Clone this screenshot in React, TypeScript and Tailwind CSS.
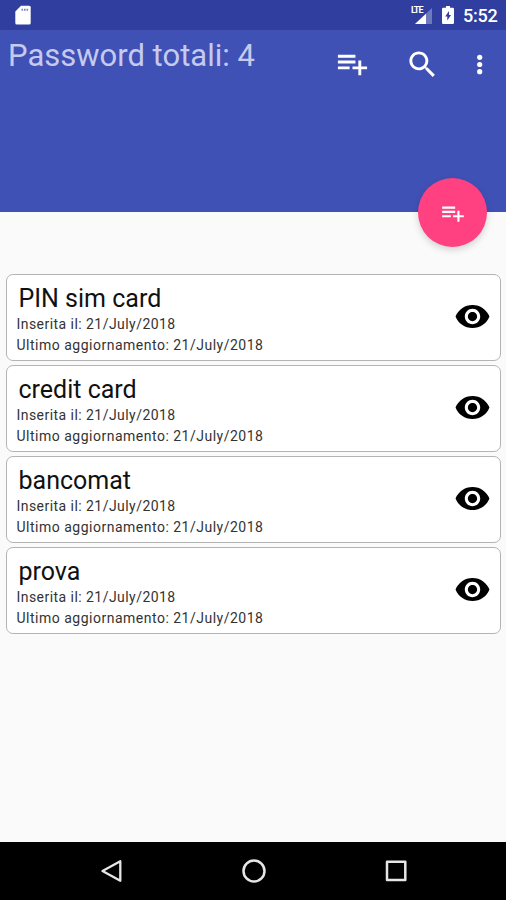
const entries = ["PIN sim card", "credit card", "bancomat", "prova"];

function PlaylistAdd({ className }: { className: string }) {
  return (
    <svg viewBox="0 0 24 24" fill="currentColor" className={className}>
      <path d="M14 10H2v2h12v-2zm0-4H2v2h12V6zm4 8v-4h-2v4h-4v2h4v4h2v-4h4v-2h-4zM2 16h8v-2H2v2z" />
    </svg>
  );
}

function StatusBar() {
  return (
    <div className="flex h-[30px] items-center bg-[#303f9f] pl-[15px] pr-[9px] text-white">
      <svg viewBox="0 0 16 20" className="h-5 w-4">
        <path d="M6 0.8H14.2Q15.700 0.800 15.700 2.300V18Q15.700 19.500 14.200 19.500H1.800Q0.300 19.500 0.300 18V6.500Z" fill="#fff" />
        <path d="M6.500 3.800h1.600v2h-1.600zM9 3.800h1.600v2H9zM11.500 3.800h1.600v2h-1.600z" fill="#7d87c2" />
      </svg>
      <div className="relative ml-auto h-[18px] w-[22px]">
        <svg viewBox="0 0 22 18" className="h-[18px] w-[22px]">
          <path d="M22 2V18H5Z" fill="#6f7abc" />
          <path d="M16 7.700V18H5Z" fill="#fff" />
          <path d="M0 0H13V9H0Z" fill="#303f9f" />
        </svg>
        <span className="absolute left-[1px] top-0 text-[9px] font-bold leading-[9px] tracking-[-1px]">LTE</span>
      </div>
      <svg viewBox="0 0 12 18" className="ml-[10px] h-[18px] w-3">
        <path d="M4 0h4v1.800h2.800q1.200 0 1.200 1.200v13.800q0 1.200-1.200 1.200H1.200Q0 18 0 16.800V3Q0 1.800 1.200 1.800H4Z" fill="#fff" />
        <path d="M7 5L3.200 10.400H5.300V14.500L9 9H7Z" fill="#303f9f" />
      </svg>
      <span className="ml-[9px] w-[34px] whitespace-nowrap pt-px text-[18px] font-medium leading-[30px] tracking-[-0.2px]">5:52</span>
    </div>
  );
}

function EntryCard({ title }: { title: string }) {
  return (
    <li className="flex h-[87px] items-center justify-between rounded-[7px] border-[1.5px] border-[#b4b4b4] bg-white pl-[9.5px] pr-[9px]">
      <div className="h-full pt-[9px]">
        <h2 className="pl-[2px] text-[25px] leading-[30px] text-[#111]">{title}</h2>
        <p className="text-[14px] leading-[20px] tracking-[0.45px] text-[#333]">Inserita il: 21/July/2018</p>
        <p className="text-[14px] leading-[22px] tracking-[0.5px] text-[#333]">Ultimo aggiornamento: 21/July/2018</p>
      </div>
      <svg viewBox="0 0 24 24" className="mb-[2px] h-[37px] w-[37px]">
        <path d="M12 4.500C7 4.500 2.730 7.610 1 12c1.730 4.390 6 7.500 11 7.500s9.270-3.110 11-7.500c-1.730-4.390-6-7.500-11-7.500zM12 17c-2.760 0-5-2.240-5-5s2.240-5 5-5 5 2.240 5 5-2.240 5-5 5zm0-8c-1.660 0-3 1.340-3 3s1.340 3 3 3 3-1.340 3-3-1.340-3-3-3z" />
      </svg>
    </li>
  );
}

export default function App() {
  return (
    <div className="flex h-[900px] w-[506px] flex-col overflow-hidden bg-[#fafafa] font-[Roboto,sans-serif]">
      <StatusBar />
      <header className="relative flex h-[182px] items-start bg-[#3f51b5] pl-2 text-white">
        <h1 className="mt-2 whitespace-nowrap text-[31px] leading-[36px] text-[#c5caee]">Password totali: 4</h1>
        <div className="ml-auto flex pr-[16px] pt-4">
          <PlaylistAdd className="h-[35px] w-[35px]" />
          <svg viewBox="0 0 24 24" fill="currentColor" className="ml-[35px] mt-[0.5px] h-[35px] w-[35px]">
            <path d="M15.500 14h-.790l-.280-.270C15.410 12.590 16 11.110 16 9.500 16 5.910 13.090 3 9.500 3S3 5.910 3 9.500 5.910 16 9.500 16c1.610 0 3.090-.590 4.230-1.570l.270.280v.790l5 4.990L20.490 19l-4.990-5zm-6 0C7.010 14 5 11.990 5 9.500S7.010 5 9.500 5 14 7.010 14 9.500 11.990 14 9.500 14z" />
          </svg>
          <svg viewBox="0 0 20 36" fill="currentColor" className="ml-[30px] h-9 w-5">
            <circle cx="9.700" cy="11.300" r="2.600" />
            <circle cx="9.700" cy="18.500" r="2.600" />
            <circle cx="9.700" cy="25.700" r="2.600" />
          </svg>
        </div>
        <button className="absolute bottom-[-35px] right-[19px] flex h-[69px] w-[69px] items-center justify-center rounded-full bg-[#ff4081] text-white shadow-[0_3px_7px_rgba(0,0,0,0.16)]">
          <PlaylistAdd className="h-[26px] w-[26px]" />
        </button>
      </header>
      <main className="flex-1 pl-[6px] pr-[5px] pt-[62px]">
        <ul className="flex flex-col gap-1">
          {entries.map((title) => (
            <EntryCard key={title} title={title} />
          ))}
        </ul>
      </main>
      <nav className="flex h-[58px] items-center justify-between bg-black pl-[100px] pr-[99px]">
        <svg viewBox="0 0 22 24" className="h-6 w-[22px]" fill="none" stroke="#e6e6e6" strokeWidth="2.300" strokeLinejoin="round">
          <path d="M20.300 2.200V21.800L2.500 12Z" />
        </svg>
        <svg viewBox="0 0 24 24" className="h-6 w-6" fill="none" stroke="#e6e6e6" strokeWidth="2.500">
          <circle cx="12" cy="12" r="10.500" />
        </svg>
        <svg viewBox="0 0 22 22" className="h-[22px] w-[22px]" fill="none" stroke="#e6e6e6" strokeWidth="2.500" strokeLinejoin="round">
          <rect x="2" y="1.700" width="18.300" height="18.300" />
        </svg>
      </nav>
    </div>
  );
}
